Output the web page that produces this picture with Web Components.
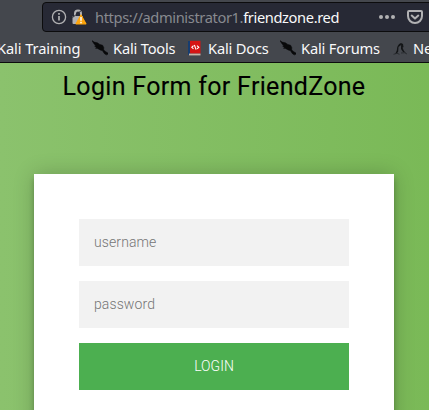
<!DOCTYPE html>
<html lang="en"><head><meta charset="utf-8"><title>Login Form for FriendZone</title>
<style>html,body{margin:0;height:100%;overflow:hidden}</style></head><body>
<browser-window>
  <address-bar slot="chrome" host="https://administrator1." domain="friendzone.red"></address-bar>
  <bookmark-bar slot="chrome">
    <book-mark style="width:83px;margin-left:-3px;letter-spacing:-.1px">Kali Training</book-mark>
    <book-mark icon="dragon" style="width:95px">Kali Tools</book-mark>
    <book-mark icon="book" style="width:93px">Kali Docs</book-mark>
    <book-mark icon="dragon" style="width:112px">Kali Forums</book-mark>
    <book-mark icon="hunter" style="width:110px">NetHunter</book-mark>
  </bookmark-bar>
  <login-page heading="Login Form for FriendZone">
    <login-field name="username"></login-field>
    <login-field name="password" type="password"></login-field>
    <login-button>LOGIN</login-button>
  </login-page>
</browser-window>
<script>
class Base extends HTMLElement{
  constructor(){super();this.attachShadow({mode:'open'});}
  connectedCallback(){this.shadowRoot.innerHTML=this.render();}
}
customElements.define('browser-window',class extends Base{render(){return `
<style>:host{display:flex;flex-direction:column;width:429px;height:410px;overflow:hidden}
header{box-sizing:border-box;height:63px;flex:none;background:#44474d;border-bottom:1px solid #0c0c0d;overflow:hidden;font-family:"Noto Sans",sans-serif}
</style><header><slot name="chrome"></slot></header><slot></slot>`}});

customElements.define('address-bar',class extends Base{render(){return `
<style>:host{display:block;padding:2px 0 0 42px;height:34px;box-sizing:border-box}
.bar{box-sizing:border-box;width:460px;height:30px;border:1px solid #0c0c0d;border-radius:4px;background:#272935;display:flex;align-items:center;padding-left:8px}
svg{flex:none;display:block}
.url{width:284px;margin-left:8px;font-size:14.67px;letter-spacing:-.38px;line-height:20px;white-space:nowrap;color:#88898f}
b{font-weight:400;color:#f9f9fa}
.dots{margin-right:12px}
</style><div class="bar">
<svg width="16" height="16" viewBox="0 0 16 16"><circle cx="8" cy="8" r="6.6" fill="none" stroke="#b1b1b3" stroke-width="1.3"/><path d="M8 7v4.5M8 4v1.7" stroke="#b1b1b3" stroke-width="1.7"/></svg>
<svg style="margin-left:4px" width="16" height="16" viewBox="0 0 16 16"><path d="M4 8V4.5a3 3 0 0 1 6 0V8" fill="none" stroke="#b1b1b3" stroke-width="2"/><rect x="1.5" y="7" width="10.5" height="8" rx="1" fill="#b1b1b3"/><path d="M1.5 8.5 11 1" stroke="#272935" stroke-width="1"/><path d="M10 6 14.9 14.8H5.1Z" fill="#ffa50b" stroke="#ffa50b" stroke-width="1.2" stroke-linejoin="round"/><path d="M10 8v3.7m0 1.1v1.4" stroke="#fff" stroke-width="1.5"/></svg>
<span class="url">${this.getAttribute('host')}<b>${this.getAttribute('domain')}</b></span>
<svg class="dots" width="16" height="16" viewBox="0 0 16 16" fill="#b1b1b3"><circle cx="2" cy="8" r="2"/><circle cx="8" cy="8" r="2"/><circle cx="14" cy="8" r="2"/></svg>
<svg width="16" height="16" viewBox="0 0 16 16" fill="none" stroke="#b1b1b3" stroke-width="2" stroke-linejoin="round" stroke-linecap="round"><path d="M2 2h12q1 0 1 1v4a7 7 0 0 1-14 0V3q0-1 1-1Z"/><path d="m4.7 6.6 3.3 3 3.3-3"/></svg>
</div>`}});

customElements.define('bookmark-bar',class extends Base{render(){return `
<style>:host{display:flex;height:28px;align-items:center;color:#f9f9fa}</style><slot></slot>`}});

const icons={
dragon:`<path d="m0 .6 2.2 1.5 3.2.7 2.4 1.6 2.8.8 1.2 2.4-.1 2.3 2.1 1.8 2.2 1.4-.1 1.3-1.6-.4.2 1.1-2.3-1.7-1.6-2.6-2.5-.9-2.6-1.5-2-.2 1.1-.8-2-1.3 1.2-.2L1.6 3.3Z" fill="#08090a" stroke="#08090a" stroke-width=".5"/>`,
book:`<path d="M1 1h3v14H1Z" fill="#173d70"/><path d="M3 .8h10.5v12.8H3Z" fill="#d61414"/><path d="M2 13.6h11.5v1.8H2Z" fill="#c9b5a8"/><path d="M6.5 5.6 4.8 7.3l1.7 1.6M10 5.6l1.8 1.7L10 8.9M7.4 5l1.7 4.6" fill="none" stroke="#fff" stroke-width="1.1"/>`,
hunter:`<path d="M3 14c1-2 2-3 2-5s1-5 4-6l2 1 .5 3-1 .8 1.5 3.2 2 2-3-1-2-3 .1-4L6.5 7l-.3 4.5L4.5 14Z" fill="#131517"/><path d="M1.5 14.3q4-2 6 0M9 13q4-1 6 1" fill="none" stroke="#292c30"/>`};
customElements.define('book-mark',class extends Base{render(){const i=icons[this.getAttribute('icon')];return `
<style>:host{display:flex;flex:none;align-items:center;font-size:14.67px;letter-spacing:-.19px;line-height:20px;white-space:nowrap}
svg{flex:none;margin:0 5px 0 12px}</style>
${i?`<svg width="16" height="16" viewBox="0 0 16 16">${i}</svg>`:''}<slot></slot>`}});

customElements.define('login-page',class extends Base{render(){return `
<style>:host{display:flex;flex:1;flex-direction:column;align-items:center;box-sizing:border-box;width:429px;padding-right:1px;font-family:Roboto,sans-serif;background:linear-gradient(to left,#7ab957,#8bc26d)}
h1{margin:8px 0 0;height:32px;font-size:25px;letter-spacing:.31px;line-height:32px;font-weight:400;color:#000;-webkit-text-stroke:.1px #000;white-space:nowrap}
section{box-sizing:border-box;width:360px;flex:none;height:310px;margin-top:71px;padding:45px;background:#fff;box-shadow:0 0 20px rgba(0,0,0,.2),0 5px 5px rgba(0,0,0,.24);display:flex;flex-direction:column;gap:15px}
</style><h1>${this.getAttribute('heading')}</h1><section><slot></slot></section>`}});

customElements.define('login-field',class extends Base{render(){const n=this.getAttribute('name');return `
<style>:host{display:block}input{display:block;box-sizing:border-box;width:100%;height:47px;padding:14px 15px 16px;border:0;border-radius:0;outline:0;background:#f2f2f2;font:300 14px/17px Roboto,sans-serif;letter-spacing:.1px}
input::placeholder{color:#757575;opacity:1}</style><input name="${n}" type="${this.getAttribute('type')||'text'}" placeholder="${n}">`}});

customElements.define('login-button',class extends Base{render(){return `
<style>:host{display:block}button{display:block;width:100%;height:47px;padding:0;border:0;background:#4caf50;color:#fff;font:300 14px/17px Roboto,sans-serif}</style><button><slot></slot></button>`}});
</script></body></html>
